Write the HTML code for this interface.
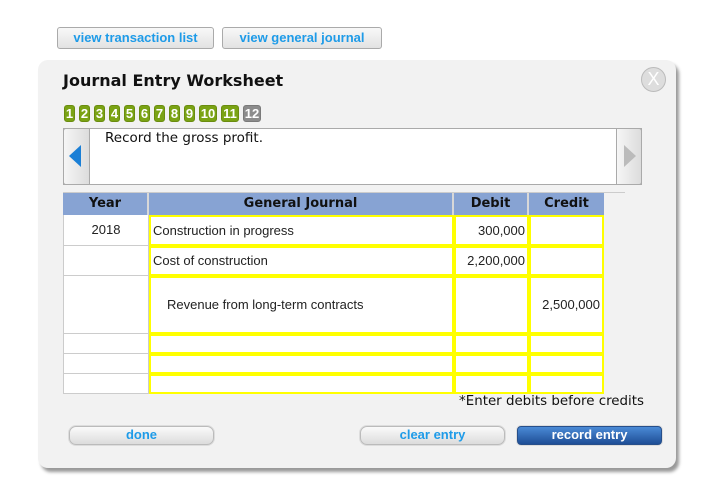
<!DOCTYPE html>
<html><head><style>
body{margin:0;width:704px;height:485px;background:#fff;position:relative;overflow:hidden;font-family:"Liberation Sans",Arial,sans-serif}
.a{position:absolute;box-sizing:border-box}
.btn{border:1px solid #aaa;border-radius:3px;background:linear-gradient(#f8f8f8,#e2e2e2);color:#1e9be8;font-weight:bold;font-size:13px;text-align:center}
.tab{top:105px;height:17px;background:#7aa314;border:1px solid #6a8c10;border-radius:3px;color:#fff;font-weight:bold;font-size:13px;text-align:center;line-height:15px}
.hd{top:193px;height:22px;background:#87a3d3;border-right:2px solid #d8d8d8;font-family:"DejaVu Sans",sans-serif;font-weight:bold;font-size:13px;text-align:center;line-height:22px;color:#111}
.yc{border:1px solid #ccc;border-top:none;background:#fff;font-size:13px;color:#222;text-align:center}
.in{border:2px solid #ffff00;background:#fff;font-size:13px;color:#222}
.rb{border:1px solid #bbb;border-radius:7px;background:linear-gradient(#fafafa,#dcdcdc);color:#1e9be8;font-weight:bold;font-size:13px;text-align:center;line-height:16px;box-shadow:0 0 0 1px #ddd}
</style></head><body>
<div class="a btn" style="left:57px;top:27px;width:157px;height:22px;line-height:20px">view transaction list</div>
<div class="a btn" style="left:222px;top:27px;width:160px;height:22px;line-height:20px">view general journal</div>

<div class="a" style="left:38px;top:60px;width:638px;height:408px;background:#f2f2f2;border-radius:10px;box-shadow:3px 4px 3px #999"></div>
<div class="a" style="left:63px;top:71px;font-family:'DejaVu Sans',sans-serif;font-weight:bold;font-size:16px;color:#111">Journal Entry Worksheet</div>
<div class="a" style="left:641px;top:67px;width:25px;height:25px;border-radius:50%;background:#ddd;border:1px solid #bbb;color:#fff;font-size:18px;text-align:center;line-height:23px">X</div>

<div class="a tab" style="left:64px;width:11px">1</div>
<div class="a tab" style="left:79px;width:11px">2</div>
<div class="a tab" style="left:94px;width:11px">3</div>
<div class="a tab" style="left:109px;width:11px">4</div>
<div class="a tab" style="left:124px;width:11px">5</div>
<div class="a tab" style="left:139px;width:11px">6</div>
<div class="a tab" style="left:154px;width:11px">7</div>
<div class="a tab" style="left:169px;width:11px">8</div>
<div class="a tab" style="left:184px;width:11px">9</div>
<div class="a tab" style="left:199px;width:18px">10</div>
<div class="a tab" style="left:221px;width:18px">11</div>
<div class="a tab" style="left:243px;width:18px;background:#8c8c8c;border-color:#7a7a7a">12</div>

<div class="a" style="left:63px;top:128px;width:579px;height:57px;background:#fff;border:1px solid #aaa"></div>
<div class="a" style="left:63px;top:128px;width:27px;height:57px;background:linear-gradient(90deg,#f6f6f6,#dcdcdc);border:1px solid #aaa;border-radius:3px 0 0 3px"></div>
<div class="a" style="left:69px;top:145px;width:0;height:0;border-top:11px solid transparent;border-bottom:11px solid transparent;border-right:12px solid #1a7fd6"></div>
<div class="a" style="left:616px;top:128px;width:26px;height:57px;background:linear-gradient(90deg,#f6f6f6,#dcdcdc);border:1px solid #aaa;border-radius:0 3px 3px 0"></div>
<div class="a" style="left:624px;top:145px;width:0;height:0;border-top:11px solid transparent;border-bottom:11px solid transparent;border-left:12px solid #bbb"></div>
<div class="a" style="left:105px;top:130px;font-family:'DejaVu Sans',sans-serif;font-size:13.5px;color:#111">Record the gross profit.</div>
<div class="a" style="left:63px;top:192px;width:562px;height:1px;background:#ccc"></div>

<div class="a hd" style="left:63px;width:86px">Year</div>
<div class="a hd" style="left:149px;width:305px">General Journal</div>
<div class="a hd" style="left:454px;width:75px">Debit</div>
<div class="a hd" style="left:529px;width:75px;border-right:none">Credit</div>

<div class="a yc" style="left:63px;top:215px;width:86px;height:31px;line-height:30px">2018</div>
<div class="a in" style="left:149px;top:215px;width:305px;height:31px;line-height:27px;padding-left:2px">Construction in progress</div>
<div class="a in" style="left:454px;top:215px;width:75px;height:31px;line-height:27px;text-align:right;padding-right:2px">300,000</div>
<div class="a in" style="left:529px;top:215px;width:75px;height:31px"></div>

<div class="a yc" style="left:63px;top:246px;width:86px;height:30px"></div>
<div class="a in" style="left:149px;top:246px;width:305px;height:30px;line-height:26px;padding-left:2px">Cost of construction</div>
<div class="a in" style="left:454px;top:246px;width:75px;height:30px;line-height:26px;text-align:right;padding-right:2px">2,200,000</div>
<div class="a in" style="left:529px;top:246px;width:75px;height:30px"></div>

<div class="a yc" style="left:63px;top:276px;width:86px;height:58px"></div>
<div class="a in" style="left:149px;top:276px;width:305px;height:58px;line-height:54px;padding-left:16px">Revenue from long-term contracts</div>
<div class="a in" style="left:454px;top:276px;width:75px;height:58px"></div>
<div class="a in" style="left:529px;top:276px;width:75px;height:58px;line-height:54px;text-align:right;padding-right:2px">2,500,000</div>

<div class="a yc" style="left:63px;top:334px;width:86px;height:20px"></div>
<div class="a in" style="left:149px;top:334px;width:305px;height:20px"></div>
<div class="a in" style="left:454px;top:334px;width:75px;height:20px"></div>
<div class="a in" style="left:529px;top:334px;width:75px;height:20px"></div>
<div class="a yc" style="left:63px;top:354px;width:86px;height:20px"></div>
<div class="a in" style="left:149px;top:354px;width:305px;height:20px"></div>
<div class="a in" style="left:454px;top:354px;width:75px;height:20px"></div>
<div class="a in" style="left:529px;top:354px;width:75px;height:20px"></div>
<div class="a yc" style="left:63px;top:374px;width:86px;height:20px"></div>
<div class="a in" style="left:149px;top:374px;width:305px;height:20px"></div>
<div class="a in" style="left:454px;top:374px;width:75px;height:20px"></div>
<div class="a in" style="left:529px;top:374px;width:75px;height:20px"></div>

<div class="a" style="left:400px;width:244px;top:394px;text-align:right;font-family:'DejaVu Sans',sans-serif;font-size:13.4px;color:#111">*Enter debits before credits</div>

<div class="a rb" style="left:69px;top:426px;width:145px;height:19px">done</div>
<div class="a rb" style="left:360px;top:426px;width:145px;height:19px">clear entry</div>
<div class="a rb" style="left:517px;top:426px;width:145px;height:19px;border-radius:4px;background:linear-gradient(#4a8ad6,#1e4e96);color:#fff;border-color:#274f8a">record entry</div>
</body></html>
